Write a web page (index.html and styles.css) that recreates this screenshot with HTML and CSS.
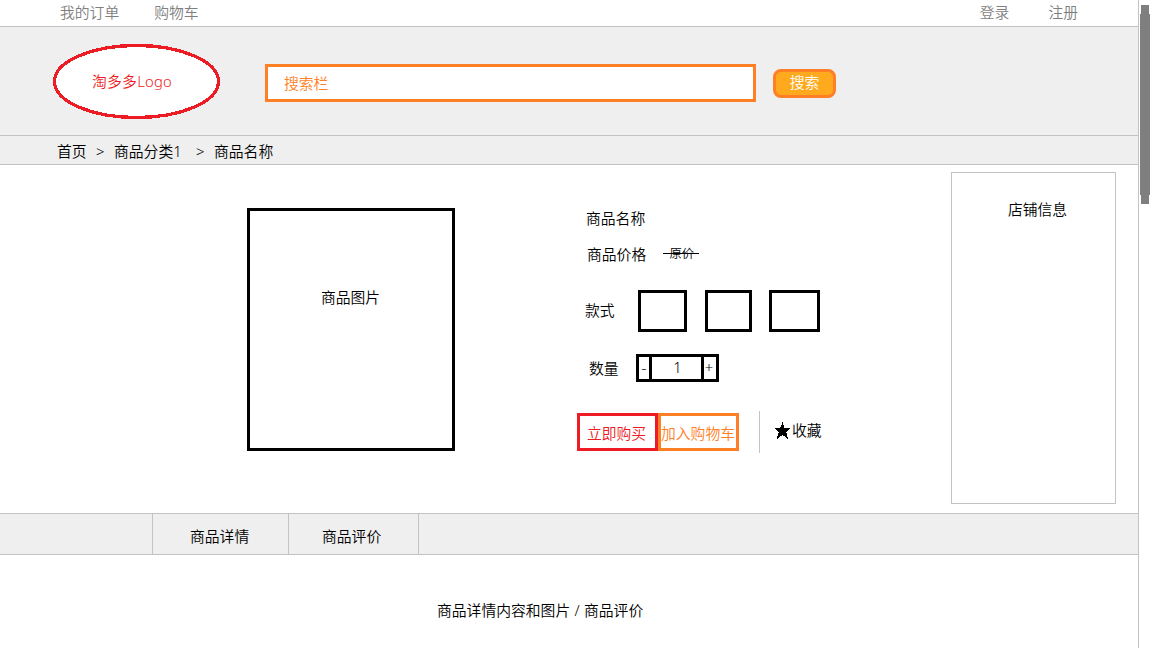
FILE: index.html
```html
<!DOCTYPE html>
<html lang="zh-CN">
<head>
<meta charset="utf-8">
<title>商品名称</title>
<link rel="stylesheet" href="styles.css">
</head>
<body>
<div class="window">
  <div class="page">
    <nav class="topbar">
      <a class="orders">我的订单</a>
      <a class="cart">购物车</a>
      <a class="login">登录</a>
      <a class="register">注册</a>
    </nav>
    <header class="header">
      <div class="logo">
        <svg class="logo-shape" viewBox="0 0 167 75" shape-rendering="crispEdges"><ellipse cx="83.5" cy="37.5" rx="82" ry="36"/></svg>
        <span class="logo-text">淘多多Logo</span>
      </div>
      <div class="search">搜索栏</div>
      <button class="search-button">搜索</button>
    </header>
    <div class="breadcrumb">
      <span class="home">首页</span><span class="sep">&gt;</span><span class="category">商品分类1</span><span class="sep">&gt;</span><span>商品名称</span>
    </div>
    <main class="product">
      <div class="photo">商品图片</div>
      <section class="info">
        <div class="name">商品名称</div>
        <div class="price">商品价格<span class="old-price">原价</span></div>
        <div class="styles"><span class="label">款式</span><i class="option first"></i><i class="option second"></i><i class="option third"></i></div>
        <div class="quantity"><span class="label">数量</span>
          <div class="stepper"><span>-</span><span class="count">1</span><span class="plus">+</span></div>
        </div>
        <div class="actions">
          <button class="buy">立即购买</button><button class="add">加入购物车</button>
          <div class="favorite">
            <svg class="star" viewBox="0 0 17 17" shape-rendering="crispEdges"><path d="M8.5 0L10.7 6H17L12.2 10L14.2 17L8.5 13L2.8 17L4.8 10L0 6H6.3Z"/></svg>收藏
          </div>
        </div>
      </section>
      <aside class="shop">店铺信息</aside>
    </main>
    <div class="tabs">
      <div class="tab details">商品详情</div>
      <div class="tab reviews">商品评价</div>
    </div>
    <div class="content">商品详情内容和图片 / 商品评价</div>
  </div>
  <div class="scrollbar">
    <div class="cap"></div><div class="thumb"></div><div class="cap"></div>
  </div>
</div>
</body>
</html>
```

FILE: styles.css
```css
* { box-sizing: border-box; }
body {
  margin: 0;
  background: #fff;
  color: #000;
  font: 350 14.8px/20px "Noto Sans", "Noto Sans CJK SC", sans-serif;
  overflow: hidden;
}
button { font: inherit; padding: 0; margin: 0; }
.window { display: flex; width: 1152px; height: 648px; }
.page { width: 1139px; flex: none; border-right: 1px solid #c3c3c3; white-space: nowrap; }

.topbar { display: flex; height: 27px; padding: 2px 60px 0 60px; border-bottom: 1px solid #c3c3c3; color: #7f7f7f; }
.cart { margin-left: 35px; }
.login { margin-left: auto; }
.register { margin-left: 39px; }

.header { display: flex; height: 109px; padding-left: 53px; background: #efefef; border-bottom: 1px solid #c3c3c3; }
.logo { display: grid; width: 167px; height: 75px; margin-top: 17px; color: #ed1c24; }
.logo-shape, .logo-text { grid-area: 1 / 1; }
.logo-shape { width: 167px; height: 75px; fill: #fff; stroke: #ed1c24; stroke-width: 3.3; }
.logo-text { padding: 27px 0 0 39px; z-index: 1; letter-spacing: .25px; }
.search { width: 491px; height: 38px; margin: 37px 0 0 45px; padding: 6px 0 0 16px; background: #fff; border: 3px solid #ff7f27; color: #ff7f27; }
.search-button { width: 63px; height: 29px; margin: 42px 0 0 17px; padding-bottom: 3px; line-height: 20px; background: #ffaa1e; border: 3px solid #ff7f27; border-radius: 8px; color: #fff; }

.breadcrumb { display: flex; height: 29px; padding: 5px 0 0 57px; background: #efefef; border-bottom: 1px solid #c3c3c3; }
.home { width: 39px; }
.sep { width: 18px; }
.category { width: 82px; }

.product { display: flex; height: 348px; }
.photo { width: 208px; height: 243px; margin: 43px 0 0 247px; padding: 76px 1px 0 0; border: 3px solid #000; text-align: center; }
.info { width: 374px; margin-left: 122px; padding-top: 43px; }
.name { padding-left: 9px; height: 36px; }
.price { display: flex; padding-left: 10px; height: 20px; }
.old-price { position: relative; width: 36px; margin-left: 17px; padding-left: 1px; text-align: center; font-size: 12.3px; }
.old-price::after { content: ""; position: absolute; left: 0; right: 0; top: 9px; height: 1px; background: #000; }
.styles { display: flex; align-items: center; height: 42px; margin-top: 26px; padding-left: 8px; }
.styles .label { width: 53px; padding-bottom: 2px; }
.option { height: 42px; border: 3px solid #000; }
.first { width: 49px; }
.second { width: 47px; margin-left: 18px; }
.third { width: 51px; margin-left: 17px; }
.quantity { display: flex; align-items: center; height: 28px; margin-top: 22px; padding-left: 12px; }
.quantity .label { width: 47px; }
.stepper { display: grid; grid-template-columns: 10px 55px 12px; width: 83px; height: 28px; border: 3px solid #000; text-align: center; }
.count { padding-left: 2px; border: solid #000; border-width: 0 3px; }
.plus { padding-right: 2px; }
.actions { display: flex; height: 42px; margin-top: 29px; }
.buy, .add { width: 81px; height: 38px; margin-top: 2px; padding: 2px 2px 0 0; background: #fff; white-space: nowrap; }
.buy { border: 3px solid #ed1c24; color: #ed1c24; }
.add { border: 3px solid #ff7f27; color: #ff7f27; }
.favorite { display: flex; align-items: center; height: 42px; margin-left: 20px; padding: 0 0 4px 14px; border-left: 1px solid #c3c3c3; }
.star { width: 17px; height: 17px; margin-right: 1px; }
.shop { width: 165px; height: 332px; margin-top: 7px; padding: 26px 0 0 8px; border: 1px solid #c3c3c3; text-align: center; }

.tabs { display: flex; height: 42px; padding-left: 152px; background: #efefef; border: solid #c3c3c3; border-width: 1px 0; }
.tab { border-left: 1px solid #c3c3c3; padding-top: 12px; }
.details { width: 136px; padding-left: 37px; }
.reviews { width: 131px; padding-left: 33px; border-right: 1px solid #c3c3c3; }
.content { padding: 45px 0 0 437px; word-spacing: .5px; }

.scrollbar { width: 10px; margin-left: 1px; padding-top: 5px; }
.cap { width: 8px; height: 9px; margin-left: 1px; background: #7f7f7f; }
.thumb { width: 10px; height: 181px; background: #7f7f7f; }
```
